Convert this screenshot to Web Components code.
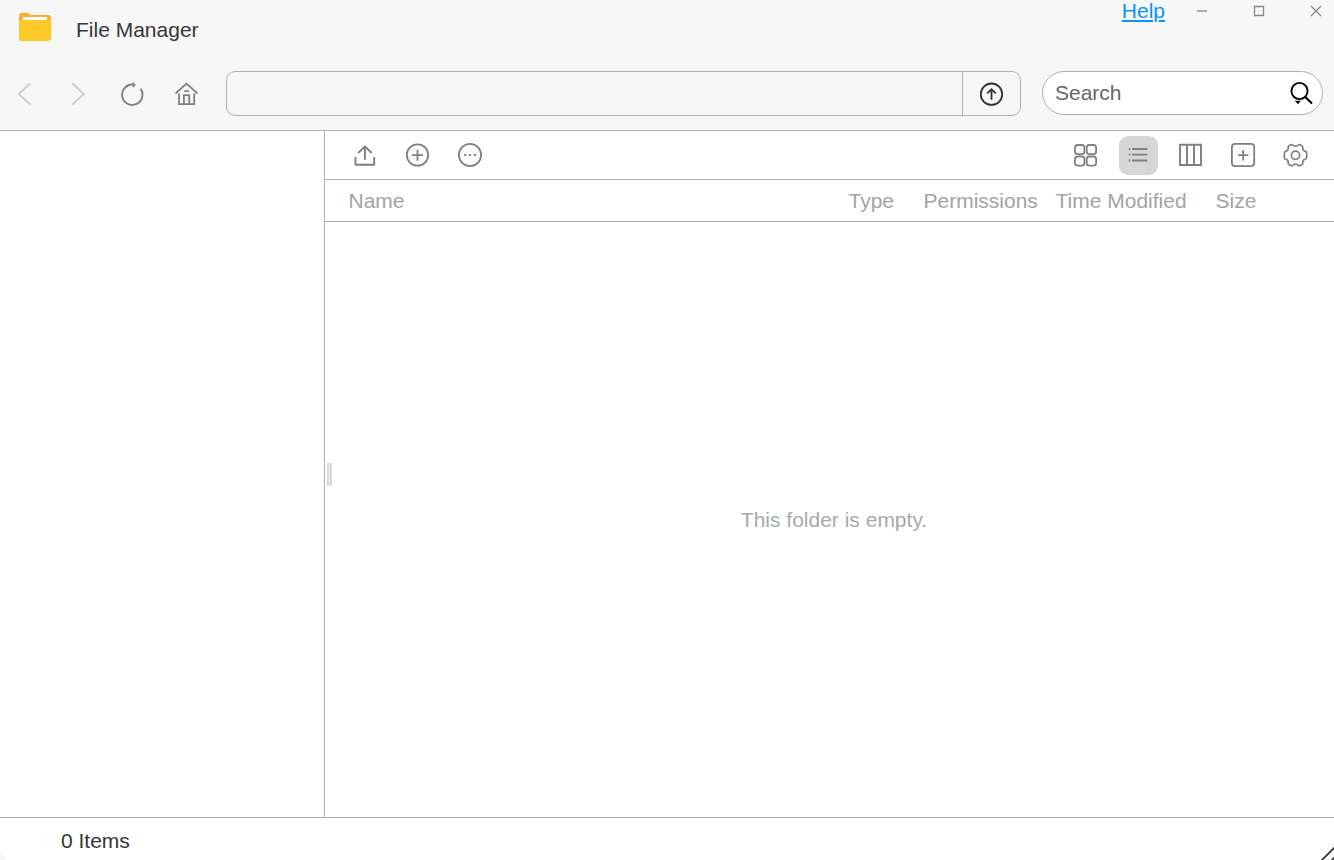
<!DOCTYPE html>
<html lang="en">
<head>
<meta charset="utf-8">
<title>File Manager</title>
<style>
    html, body {
        margin: 0;
        height: 100%;
        overflow: hidden;
    }

    body {
        font: 21px/24px "Liberation Sans", Arial, sans-serif;
        color: #363636;
        background: #fff;
        --bar: #f7f7f7;
        --line: #b0b0b0;
        --muted: #a3a3a3;
    }
</style>
</head>
<body>
<file-manager></file-manager>

<script>
    const ICONS = {
        folder: [32, 30, `
            <path d="M0 14V3.300Q0 .9 2.500 .9H8Q9.500 .9 10.500 1.900L11.500 3H29.500Q32 3 32 5.500V14Z" fill="#ffac2f"/>
            <rect x="4" y="5" width="24" height="5" fill="#fff"/>
            <path d="M0 9Q1 8 2.500 8H29.500Q31 8 32 9V26.500Q32 29 29.500 29H2.500Q0 29 0 26.500Z" fill="#ffca28"/>`],
        minimize: [12, 12, '<path d="M1 6H11" stroke="#aaa" stroke-width="2"/>'],
        maximize: [12, 12, '<path d="M1.500 1.500H10.500V10.500H1.500Z" stroke="#888" stroke-width="1.300"/>'],
        close: [12, 12, '<path d="M1 1L11 11M11 1L1 11" stroke="#888" stroke-width="1.300"/>'],
        back: [32, 32, '<path d="M22.300 5.300L10.800 16L22.300 26.500" stroke="#d0cfcd" stroke-width="2"/>'],
        forward: [32, 32, '<path d="M10.300 5.300L21.800 16L10.300 26.500" stroke="#d0cfcd" stroke-width="2"/>'],
        reload: [32, 32, `
            <path d="M24.600 10.800A10.200 10.200 0 1 1 17.500 6.600" stroke-width="1.900"/>
            <path d="M16.600 4.600L18.900 6.900L16.700 9" stroke-width="1.400"/>`],
        home: [32, 32, `
            <path d="M5.500 15.500L16.500 5.700L27.500 15.500" stroke-width="1.800"/>
            <path d="M9 15.500V26.200H24.200V15.500M13.900 26V17.200H19.200V26M14.200 13.200H18.900" stroke-width="1.800"/>`],
        up: [32, 32, '<circle cx="15.500" cy="16.200" r="10.700" stroke="#333" stroke-width="1.800"/><path d="M15.500 21.700V11.700M11.200 15.400L15.500 11.200L19.800 15.400" stroke="#333" stroke-width="1.800"/>'],
        search: [26, 26, `
            <circle cx="11.500" cy="11" r="8.100" stroke="#000" stroke-width="1.900"/>
            <path d="M17.300 17L24 23.500" stroke="#000" stroke-width="2.100"/>
            <path d="M6.800 20.700H13L9.900 24.200Z" fill="#000"/>`],
        upload: [39, 39, '<path d="M10.500 21V28.700H29.200V21M19.900 23.800V10.800M13.200 17L19.900 10.300L26.600 17" stroke-linejoin="round" stroke-width="1.900"/>'],
        add: [39, 39, '<circle cx="19.500" cy="19" r="10.700"/><path d="M14 19.200H25M19.500 13.700V24.700"/>'],
        more: [39, 39, '<circle cx="20" cy="19" r="11.100"/><path d="M14.200 19H16.300M19 19H21.100M23.800 19H25.900" stroke-width="2"/>'],
        grid: [39, 39, `
            <rect x="9" y="9" width="9.400" height="9.200" rx="2.600"/>
            <rect x="20.700" y="9" width="9.400" height="9.200" rx="2.600"/>
            <rect x="9" y="20.500" width="9.400" height="9.200" rx="2.600"/>
            <rect x="20.700" y="20.500" width="9.400" height="9.200" rx="2.600"/>`],
        list: [39, 39, '<path d="M9.800 13H11.500M13 13H28.300M9.800 18.600H11.500M13 18.600H28.300M9.800 24.500H11.500M13 24.500H28.300"/>'],
        columns: [39, 39, '<path d="M9 8.700H30V29H9ZM16 8.700V29M23 8.700V29" stroke-width="1.900"/>'],
        newtab: [39, 39, '<rect x="7.900" y="7.900" width="22.300" height="22.300" rx="3.200"/><path d="M14 19.200H24.400M19.200 14V24.400"/>'],
        settings: [39, 39, `
            <path d="M22.700 8.700Q24 8.300 25.800 9.600Q27.200 10.600 26.800 12.200Q26.800 14.800 29 15.100Q30.700 15.600 30.700 17.400V21Q30.700 22.800 29 23.300Q26.800 23.600 26.800 26.200Q27.200 27.800 25.800 28.800Q24 30.100 22.700 29.700Q21.500 28.200 19.500 28.200Q17.500 28.200 16.300 29.700Q15 30.100 13.200 28.800Q11.800 27.800 12.200 26.200Q12.200 23.600 10 23.300Q8.300 22.800 8.300 21V17.400Q8.300 15.600 10 15.100Q12.200 14.800 12.200 12.200Q11.800 10.600 13.200 9.600Q15 8.300 16.300 8.700Q17.500 10.200 19.500 10.200Q21.500 10.200 22.700 8.700Z" stroke-width="1.700"/>
            <circle cx="19.500" cy="19.200" r="4.100" stroke-width="1.700"/>`],
        resize: [14, 14, '<path d="M1 15L15 1M11 15L15 11" stroke="#333" stroke-width="1.800"/>']
    };

    class FmIcon extends HTMLElement {
        connectedCallback() {
            const [width, height, shapes] = ICONS[this.getAttribute('name')];
            this.attachShadow({ mode: 'open' });
            this.shadowRoot.innerHTML = `
                <style>
                    :host { display: block; flex: none; width: ${width}px; height: ${height}px; }
                    svg { display: block; }
                </style>
                <svg width="${width}" height="${height}" fill="none" stroke-width="1.800">${shapes}</svg>
            `;
            this.shadowRoot.querySelectorAll('svg > *').forEach((shape) => {
                // filled shapes keep no outline
                if (!shape.hasAttribute('fill') && !shape.hasAttribute('stroke')) {
                    shape.setAttribute('stroke', '#808080');
                }
            });
        }
    }

    class FmTitlebar extends HTMLElement {
        connectedCallback() {
            this.attachShadow({ mode: 'open' });
            this.shadowRoot.innerHTML = `
                <style>
                    :host { display: flex; height: 60px; box-sizing: border-box; padding: 0 12px 0 19px; }
                    .logo { margin-top: 12px; }
                    .title { margin: 18px auto 0 25px; }
                    .help {
                        height: 24px;
                        margin: -1px 31px 0 0;
                        color: #0a95f5;
                        text-decoration: underline;
                        text-decoration-thickness: 2px;
                        text-underline-offset: 2px;
                    }
                    .controls { display: flex; gap: 45px; margin-top: 5px; }
                </style>
                <fm-icon class="logo" name="folder"></fm-icon>
                <div class="title"><slot></slot></div>
                <a class="help" href="#">Help</a>
                <div class="controls">
                    <fm-icon name="minimize"></fm-icon>
                    <fm-icon name="maximize"></fm-icon>
                    <fm-icon name="close"></fm-icon>
                </div>
            `;
        }
    }

    class FmNavbar extends HTMLElement {
        connectedCallback() {
            this.attachShadow({ mode: 'open' });
            this.shadowRoot.innerHTML = `
                <style>
                    :host { display: flex; height: 70px; box-sizing: border-box; padding: 11px 11px 0 8px; }
                    .history { display: flex; gap: 22px; margin: 7px 24px 0 0; }
                    .address {
                        flex: 1;
                        display: flex;
                        justify-content: flex-end;
                        height: 45px;
                        box-sizing: border-box;
                        margin-right: 21px;
                        border: 1px solid var(--line);
                        border-radius: 9px;
                    }
                    .go {
                        width: 57px;
                        display: flex;
                        justify-content: center;
                        align-items: center;
                        border-left: 1px solid var(--line);
                    }
                    .search {
                        display: flex;
                        justify-content: space-between;
                        align-items: center;
                        width: 281px;
                        height: 44px;
                        box-sizing: border-box;
                        padding: 0 8px 0 12px;
                        border: 1px solid var(--line);
                        border-radius: 22px;
                        background: #fff;
                        color: #666;
                    }
                </style>
                <div class="history">
                    <fm-icon name="back"></fm-icon>
                    <fm-icon name="forward"></fm-icon>
                    <fm-icon name="reload"></fm-icon>
                    <fm-icon name="home"></fm-icon>
                </div>
                <div class="address"><div class="go"><fm-icon name="up"></fm-icon></div></div>
                <div class="search"><span>Search</span><fm-icon name="search"></fm-icon></div>
            `;
        }
    }

    class FmToolbar extends HTMLElement {
        connectedCallback() {
            this.attachShadow({ mode: 'open' });
            this.shadowRoot.innerHTML = `
                <style>
                    :host {
                        display: flex;
                        justify-content: space-between;
                        height: 49px;
                        box-sizing: border-box;
                        padding: 5px 19px 0 20px;
                        border-bottom: 1px solid var(--line);
                    }
                    .actions, .views { display: grid; height: 39px; }
                    .actions { grid-template-columns: 53px 52px 39px; }
                    .views { grid-template-columns: 53px 52px 53px 52px 39px; }
                    .active { border-radius: 9px; background: #d6d6d6; }
                </style>
                <div class="actions">
                    <fm-icon name="upload"></fm-icon>
                    <fm-icon name="add"></fm-icon>
                    <fm-icon name="more"></fm-icon>
                </div>
                <div class="views">
                    <fm-icon name="grid"></fm-icon>
                    <fm-icon class="active" name="list"></fm-icon>
                    <fm-icon name="columns"></fm-icon>
                    <fm-icon name="newtab"></fm-icon>
                    <fm-icon name="settings"></fm-icon>
                </div>
            `;
        }
    }

    class FmColumns extends HTMLElement {
        connectedCallback() {
            this.attachShadow({ mode: 'open' });
            this.shadowRoot.innerHTML = `
                <style>
                    :host {
                        display: grid;
                        grid-template-columns: 500px 75px 132px 160px 1fr;
                        height: 42px;
                        box-sizing: border-box;
                        padding: 9px 0 0 23.500px;
                        border-bottom: 1px solid var(--line);
                        color: var(--muted);
                        white-space: nowrap;
                    }
                </style>
                <span>Name</span>
                <span>Type</span>
                <span>Permissions</span>
                <span>Time Modified</span>
                <span>Size</span>
            `;
        }
    }

    class FmStatus extends HTMLElement {
        connectedCallback() {
            this.attachShadow({ mode: 'open' });
            this.shadowRoot.innerHTML = `
                <style>
                    :host {
                        display: flex;
                        justify-content: space-between;
                        height: 43px;
                        box-sizing: border-box;
                        padding-left: 61px;
                        border-top: 1px solid var(--line);
                        background: linear-gradient(45deg, #f7f7f7 5px, transparent 6px);
                    }
                    .count { margin-top: 11px; }
                    fm-icon { align-self: flex-end; }
                </style>
                <span class="count"><slot></slot></span>
                <fm-icon name="resize"></fm-icon>
            `;
        }
    }

    class FileManager extends HTMLElement {
        connectedCallback() {
            this.attachShadow({ mode: 'open' });
            this.shadowRoot.innerHTML = `
                <style>
                    :host { display: flex; flex-direction: column; height: 100vh; }
                    header { height: 131px; box-sizing: border-box; border-bottom: 1px solid var(--line); background: var(--bar); }
                    main { flex: 1; display: flex; min-height: 0; }
                    .sidebar { width: 324px; border-right: 1px solid var(--line); }
                    .content { flex: 1; display: flex; flex-direction: column; }
                    .files { flex: 1; display: flex; align-items: center; }
                    .splitter {
                        width: 5px;
                        height: 23px;
                        box-sizing: border-box;
                        margin: -91px 0 0 2px;
                        border: solid #d8d8d8;
                        border-width: 0 2px;
                        background: #f2f2f2;
                    }
                    .empty { flex: 1; margin-left: 2px; text-align: center; color: #a9a9a9; }
                </style>
                <header>
                    <fm-titlebar>File Manager</fm-titlebar>
                    <fm-navbar></fm-navbar>
                </header>
                <main>
                    <div class="sidebar"></div>
                    <div class="content">
                        <fm-toolbar></fm-toolbar>
                        <fm-columns></fm-columns>
                        <div class="files">
                            <div class="splitter"></div>
                            <div class="empty">This folder is empty.</div>
                        </div>
                    </div>
                </main>
                <fm-status>0 Items</fm-status>
            `;
        }
    }

    customElements.define('fm-icon', FmIcon);
    customElements.define('fm-titlebar', FmTitlebar);
    customElements.define('fm-navbar', FmNavbar);
    customElements.define('fm-toolbar', FmToolbar);
    customElements.define('fm-columns', FmColumns);
    customElements.define('fm-status', FmStatus);
    customElements.define('file-manager', FileManager);
</script>
</body>
</html>
